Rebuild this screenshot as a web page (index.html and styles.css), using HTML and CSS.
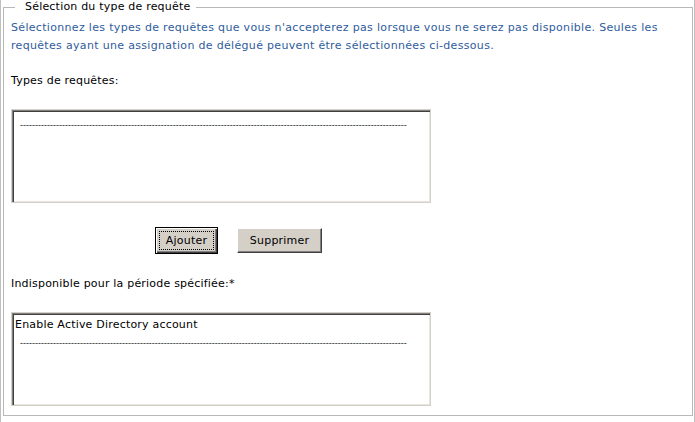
FILE: index.html
```html
<!DOCTYPE html>
<html>
<head>
  <title>Sélection du type de requête</title>
  <link rel="stylesheet" href="styles.css">
</head>
<body>
  <div class="frame">
    <fieldset class="group">
      <legend>Sélection du type de requête</legend>

      <p class="intro">Sélectionnez les types de requêtes que vous n'accepterez pas lorsque vous ne serez pas disponible. Seules les requêtes ayant une assignation de délégué peuvent être sélectionnées ci-dessous.</p>

      <div class="label">Types de requêtes:</div>
      <div class="listbox first">
        <div class="sep">---------------------------------------------------------------------------------------------------------------------------------</div>
      </div>

      <div class="actions">
        <button type="button" class="btn focused"><span>Ajouter</span></button>
        <button type="button" class="btn wide"><span>Supprimer</span></button>
      </div>

      <div class="label spaced">Indisponible pour la période spécifiée:*</div>
      <div class="listbox second">
        <div class="item">Enable Active Directory account</div>
        <div class="sep">---------------------------------------------------------------------------------------------------------------------------------</div>
      </div>
    </fieldset>
  </div>
</body>
</html>
```

FILE: styles.css
```css
html, body {
  margin: 0;
  background-color: #fff;
}

body {
  font-family: "DejaVu Sans", Verdana, sans-serif;
  font-size: 11px;
  letter-spacing: 0.2px;
  color: #000;
}

.frame {
  width: 695px;
  height: 422px;
  box-sizing: border-box;
  border-left: 1px solid #c0c0c0;
  border-right: 1px solid #c0c0c0;
  padding: 0 1px 0 2px;
  overflow: hidden;
}

.group {
  margin: 0;
  padding: 0 7px 9px 7px;
  border: 1px solid #b8b8b8;
  display: flex;
  flex-direction: column;
  align-items: flex-start;
}

.group legend {
  margin-left: 4px;
  padding: 0 6px 0 10px;
  line-height: 14px;
}

.intro {
  margin: 5px 0 0 0;
  line-height: 18px;
  letter-spacing: 0.32px;
  color: #2f5c9c;
}

.label {
  line-height: 14px;
  margin-top: 19px;
}

.label.spaced {
  margin-top: 23px;
}

.listbox {
  width: 420px;
  height: 94px;
  box-sizing: border-box;
  margin-top: 21px;
  border: 1px solid #d4d0c8;
  box-shadow: inset 1px 1px #808080, inset 2px 2px #404040, inset -1px -1px #e8e6e0;
  padding: 3px 0 0 3px;
}

.listbox.second {
  margin-top: 21px;
}

.item {
  line-height: 18px;
}

.sep {
  font-family: "Liberation Sans", Arial, sans-serif;
  font-size: 9px;
  letter-spacing: 0;
  line-height: 18px;
  padding-left: 5px;
  color: #222;
  white-space: nowrap;
  overflow: hidden;
}

.first .sep {
  margin-top: 3px;
}

.actions {
  display: flex;
  gap: 19px;
  align-items: center;
  margin: 24px 0 0 144px;
}

.btn {
  font-family: inherit;
  font-size: 11px;
  letter-spacing: 0.2px;
  color: #000;
  background-color: #d4d0c8;
  width: 85px;
  height: 25px;
  padding: 0;
  border: 1px solid;
  border-color: #fff #404040 #404040 #fff;
  box-shadow: inset -1px -1px #808080;
  cursor: pointer;
}

.btn.focused {
  width: 63px;
  height: 27px;
  padding: 0 3px;
  border: 1px solid #000;
  box-shadow: inset 1px 1px #fff, inset -1px -1px #404040, inset -2px -2px #808080;
}

.btn.focused span {
  display: block;
  padding: 2px 0;
  border: 1px dotted #000;
}
```
